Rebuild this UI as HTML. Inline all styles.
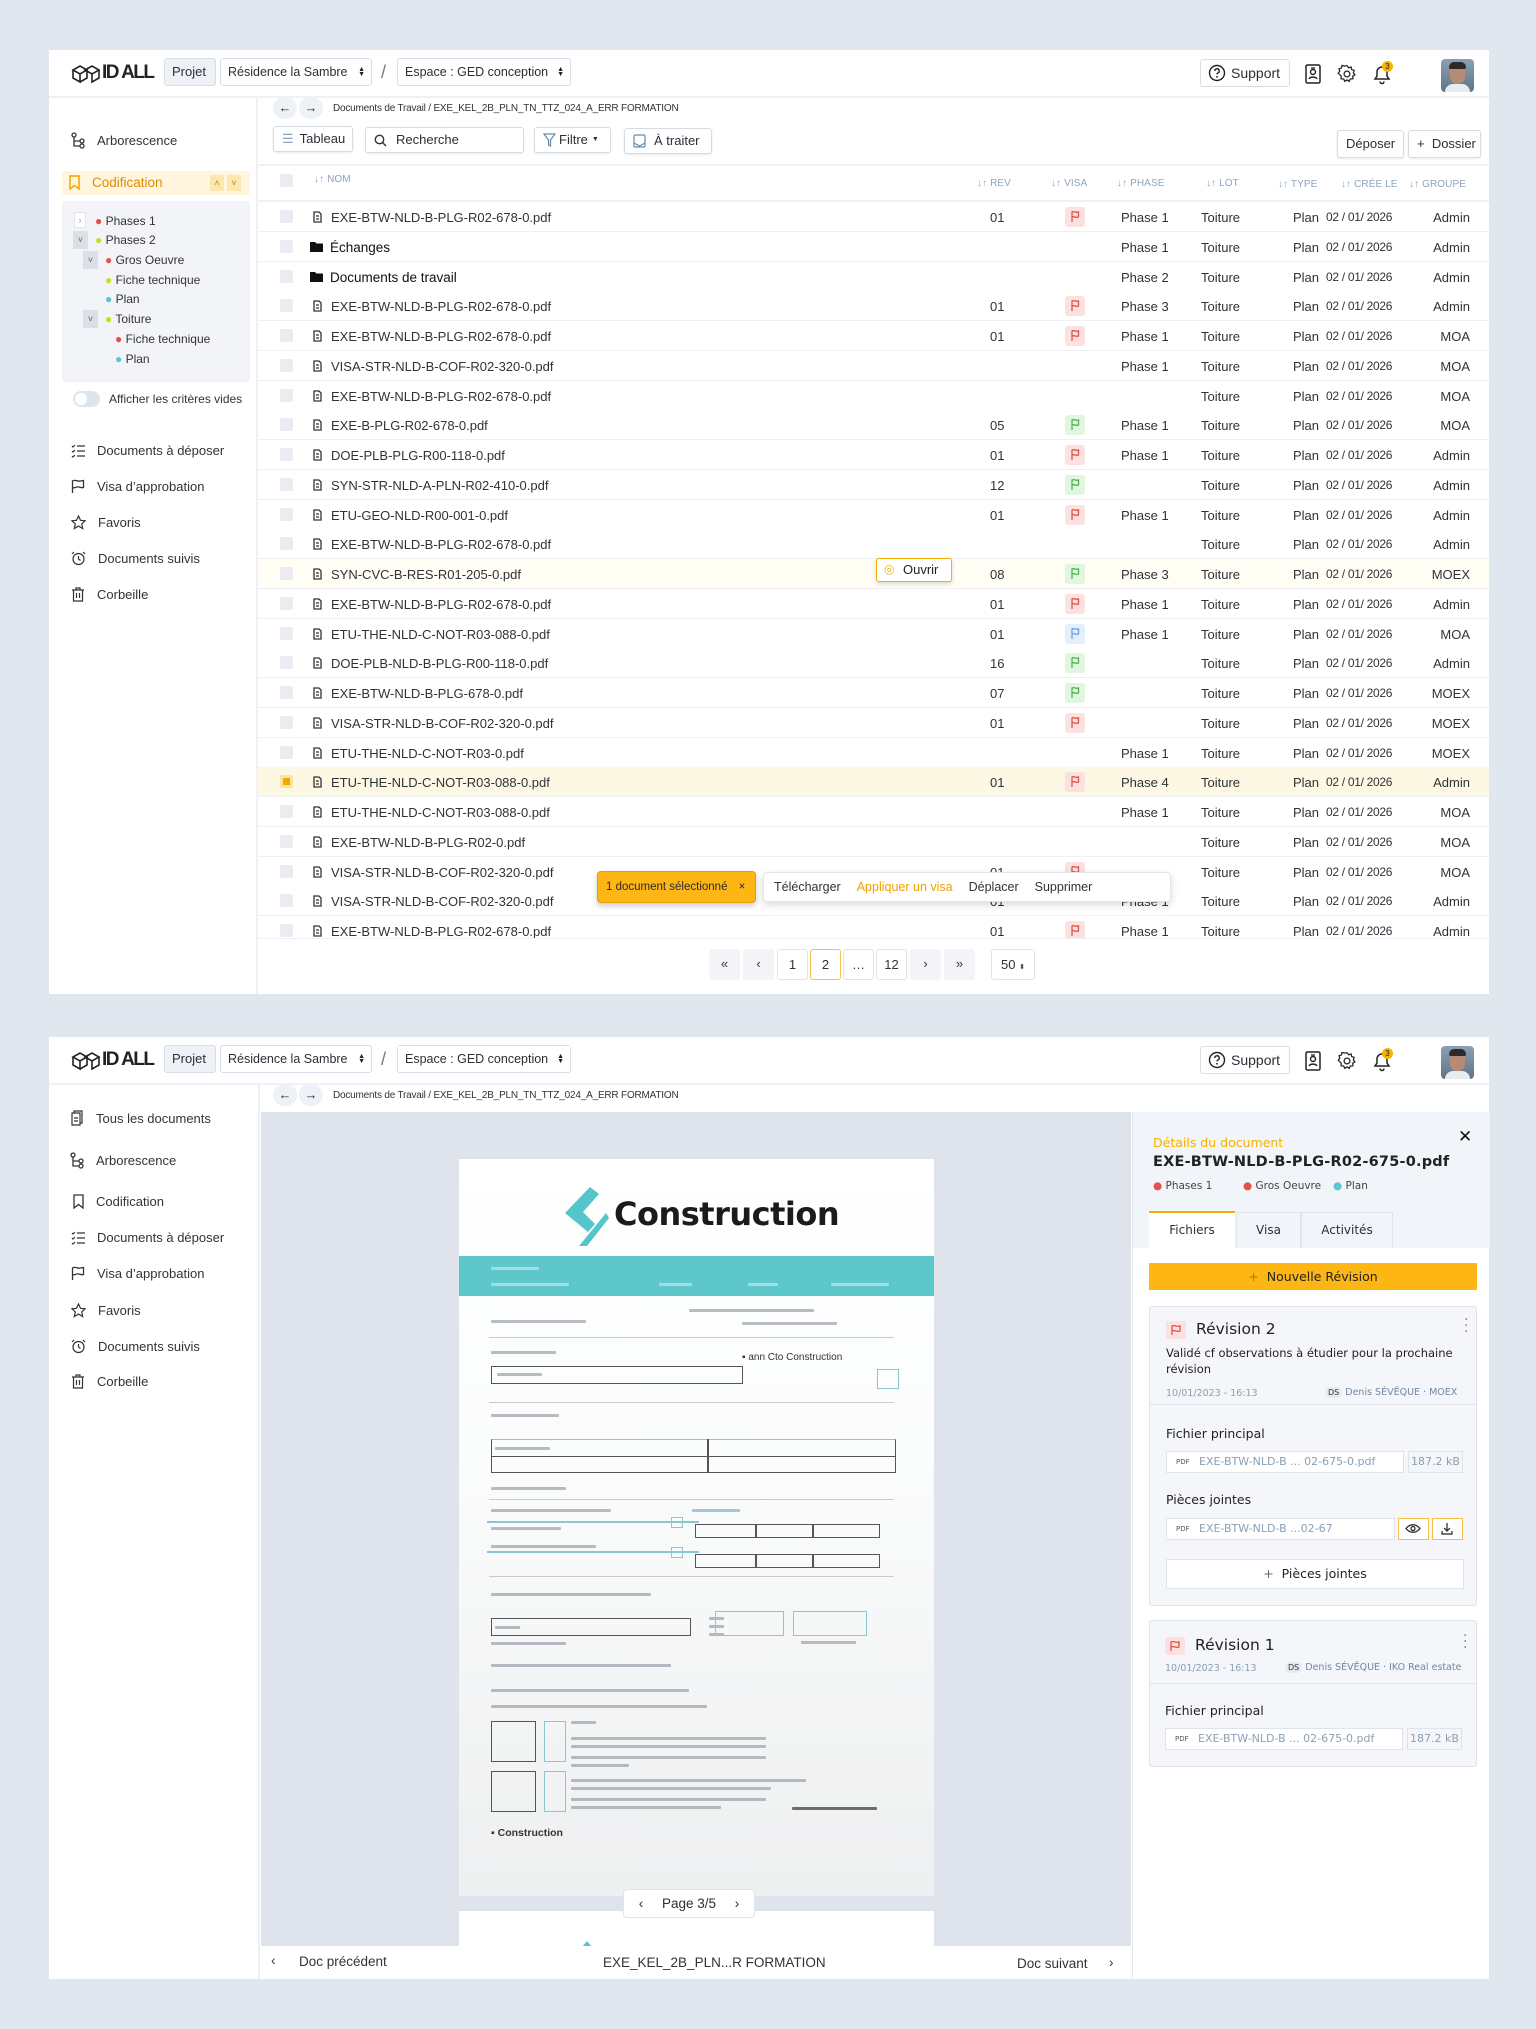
<!DOCTYPE html>
<html><head><meta charset="utf-8">
<style>
*{box-sizing:border-box;margin:0;padding:0}
body{width:1536px;height:2029px;background:#e1e7ef;font-family:"Liberation Sans",sans-serif;color:#2b2f36;position:relative;overflow:hidden}
.a{position:absolute}
.panel{position:absolute;background:#fff}
.hdr{position:absolute;left:0;right:0;top:0;height:48px;border-bottom:2px solid #eef1f5;background:#fff}
.sel{position:absolute;height:28px;border:1px solid #d9dee6;border-radius:3px;font-size:12.5px;line-height:26px;padding-left:7px;background:#fff;white-space:nowrap}
.arr{position:absolute;right:6px;top:8px;font-size:7px;line-height:5px;color:#222}
.nav{font-family:"Liberation Sans",sans-serif}
.side{position:absolute;font-size:13px;color:#333;display:flex;align-items:center;white-space:nowrap}
.side svg{margin-right:12px}
.btn{position:absolute;height:26px;border:1px solid #d7dce3;border-radius:3px;background:#fff;font-size:13px;line-height:24px;box-shadow:0 1px 2px rgba(0,0,0,.08);display:flex;align-items:center;padding:0 8px;white-space:nowrap}
.th{position:absolute;top:176px;font-size:10px;color:#8fa3bd;letter-spacing:.1px;white-space:nowrap}
.row{position:absolute;left:0;width:1231px;height:30px;border-bottom:1px solid #edf0f4;font-size:13px;color:#2f3338}
.row span{position:absolute;top:8px;white-space:nowrap}
.cb{position:absolute;left:22px;top:8px;width:13px;height:13px;background:#e9ecf1;border-radius:2px}
.fl{position:absolute;left:807px;top:5px;width:20px;height:20px;border-radius:3px}
.r{background:#fde1df}.g{background:#e1f6de}.b{background:#e2f0fb}
.pg{position:absolute;top:950px;width:31px;height:31px;border-radius:3px;font-size:13px;text-align:center;line-height:29px;color:#333;white-space:nowrap}
.ln{position:absolute;height:3px;background:#9aa0a8;border-radius:1px;opacity:.7}
.bx{position:absolute;border:1.5px solid #555}
.bb{position:absolute;border:1.5px solid #8cc6d4}
.hl{position:absolute;height:1px;background:#c7cbd0}
.poppins{font-family:"DejaVu Sans","Liberation Sans",sans-serif}
</style></head><body>

<!-- ============ TOP PANEL ============ -->
<div class="panel" style="left:49px;top:50px;width:1440px;height:944px">
 <div class="hdr">
  <svg class="a" style="left:22px;top:13px" width="30" height="22" viewBox="0 0 30 22"><g fill="none" stroke="#222" stroke-width="1.6"><path d="M2 7l7-4 7 4-7 4z M2 7v8l7 4v-8 M16 7v8l-7 4"/><path d="M14 7l7-4 7 4-7 4z M28 7v8l-7 4v-8"/></g></svg>
  <div class="a" style="left:53px;top:12px;font-size:19px;font-weight:bold;letter-spacing:-1.5px;color:#222">ID ALL</div>
  <div class="sel" style="left:115px;top:8px;width:52px;background:#eef1f5;font-size:13px">Projet</div>
  <div class="sel" style="left:171px;top:8px;width:152px">Résidence la Sambre<span class="arr">▲<br>▼</span></div>
  <div class="a" style="left:332px;top:12px;font-size:18px;color:#6b7a90">/</div>
  <div class="sel" style="left:348px;top:8px;width:174px">Espace : GED conception<span class="arr">▲<br>▼</span></div>
  <div class="sel" style="left:1151px;top:9px;width:90px;display:flex;align-items:center;font-size:14px"><svg width="18" height="18" viewBox="0 0 18 18" style="margin-right:5px"><circle cx="9" cy="9" r="7.5" fill="none" stroke="#222" stroke-width="1.4"/><path d="M6.8 7a2.2 2.2 0 1 1 3 2c-.6.3-.8.7-.8 1.4" fill="none" stroke="#222" stroke-width="1.4"/><circle cx="9" cy="12.8" r=".9" fill="#222"/></svg>Support</div>
  <svg class="a" style="left:1256px;top:14px" width="16" height="20" viewBox="0 0 16 20"><rect x="1" y="1" width="14" height="18" rx="1.5" fill="none" stroke="#222" stroke-width="1.5"/><circle cx="8" cy="8" r="2.5" fill="none" stroke="#222" stroke-width="1.4"/><path d="M4 15c1-2.5 7-2.5 8 0" fill="none" stroke="#222" stroke-width="1.4"/><path d="M6 4h4" stroke="#222" stroke-width="1.3"/></svg>
  <svg class="a" style="left:1288px;top:14px" width="20" height="20" viewBox="0 0 24 24"><path d="M12 2l2 2.5 3-.8.6 3 3 1-1 2.9 1.9 2.4-2.6 1.7.2 3.1-3.1.2-1.4 2.8-2.6-1.7-2.6 1.7-1.4-2.8-3.1-.2.2-3.1L1.5 11l1.9-2.4-1-2.9 3-1 .6-3 3 .8z" fill="none" stroke="#222" stroke-width="1.5"/><circle cx="12" cy="12" r="3.5" fill="none" stroke="#222" stroke-width="1.5"/></svg>
  <svg class="a" style="left:1322px;top:13px" width="22" height="22" viewBox="0 0 22 22"><path d="M4 16h14l-2-3V9a5 5 0 0 0-10 0v4z M9 18.5a2 2 0 0 0 4 0" fill="none" stroke="#222" stroke-width="1.5"/></svg>
  <div class="a" style="left:1333px;top:11px;width:11px;height:11px;border-radius:6px;background:#f7b500;font-size:8px;color:#222;text-align:center;line-height:11px">3</div>
  <div class="a" style="left:1392px;top:9px;width:33px;height:33px;border-radius:4px;background:linear-gradient(#8aa0b5,#5f7487)"><div class="a" style="left:9px;top:5px;width:15px;height:20px;border-radius:7px;background:#b58b73"></div><div class="a" style="left:8px;top:3px;width:17px;height:7px;border-radius:6px 6px 2px 2px;background:#2d2a28"></div><div class="a" style="left:4px;top:25px;width:25px;height:8px;border-radius:8px 8px 0 0;background:#e8ecef"></div></div>
 </div>

 <!-- sidebar -->
 <div class="a" style="left:0;top:48px;width:209px;height:896px;border-right:2px solid #eef1f5"></div>
 <div class="side" style="left:22px;top:82px"><svg width="14" height="17" viewBox="0 0 14 17"><g fill="none" stroke="#333" stroke-width="1.3"><circle cx="3" cy="3" r="2"/><circle cx="11" cy="9" r="2"/><circle cx="11" cy="14" r="2"/><path d="M3 5v9h6 M3 9h6"/></g></svg>Arborescence</div>
 <div class="a" style="left:13px;top:121px;width:188px;height:24px;background:#fff6dd;border-radius:3px"></div>
 <div class="side" style="left:20px;top:125px;color:#e28a00;font-size:13.5px"><svg width="11" height="15" viewBox="0 0 11 15"><path d="M1 1h9v13l-4.5-3.5L1 14z" fill="none" stroke="#f0a000" stroke-width="1.4"/></svg>Codification</div>
 <div class="a" style="left:161px;top:125px;width:14px;height:16px;background:#fbe7b0;font-size:9px;text-align:center;line-height:16px;color:#c88400">˄</div>
 <div class="a" style="left:178px;top:125px;width:14px;height:16px;background:#fbe7b0;font-size:9px;text-align:center;line-height:16px;color:#c88400">˅</div>
 <div class="a" style="left:13px;top:151px;width:188px;height:181px;background:#f2f4f7;border-radius:3px"></div>
 <div class="a" style="left:25px;top:162px;width:12px;height:16px;border:1px solid #e1e5eb;background:#fff;font-size:9px;color:#999;text-align:center;line-height:14px">›</div>
 <div class="a" style="left:24px;top:181px;width:15px;height:18px;background:#d9e0e8;font-size:9px;color:#666;text-align:center;line-height:18px">˅</div>
 <div class="a" style="left:34px;top:201px;width:15px;height:18px;background:#d9e0e8;font-size:9px;color:#666;text-align:center;line-height:18px">˅</div>
 <div class="a" style="left:34px;top:260px;width:15px;height:18px;background:#d9e0e8;font-size:9px;color:#666;text-align:center;line-height:18px">˅</div>
 <div class="a" style="font-size:12px;color:#333;left:0;top:0">
  <div class="a" style="left:46px;top:164px;white-space:nowrap"><b style="color:#e0524a">●</b> Phases 1</div>
  <div class="a" style="left:46px;top:183px;white-space:nowrap"><b style="color:#c6e020">●</b> Phases 2</div>
  <div class="a" style="left:56px;top:203px;white-space:nowrap"><b style="color:#e0524a">●</b> Gros Oeuvre</div>
  <div class="a" style="left:56px;top:223px;white-space:nowrap"><b style="color:#c6e020">●</b> Fiche technique</div>
  <div class="a" style="left:56px;top:242px;white-space:nowrap"><b style="color:#5ec4d0">●</b> Plan</div>
  <div class="a" style="left:56px;top:262px;white-space:nowrap"><b style="color:#c6e020">●</b> Toiture</div>
  <div class="a" style="left:66px;top:282px;white-space:nowrap"><b style="color:#e0524a">●</b> Fiche technique</div>
  <div class="a" style="left:66px;top:302px;white-space:nowrap"><b style="color:#5ec4d0">●</b> Plan</div>
 </div>
 <div class="a" style="left:24px;top:341px;width:27px;height:16px;border-radius:8px;background:#dfe5ec"><div class="a" style="left:2px;top:2px;width:12px;height:12px;border-radius:6px;background:#fff"></div></div>
 <div class="a" style="left:60px;top:342px;font-size:12px;color:#333;white-space:nowrap">Afficher les critères vides</div>
 <div class="side" style="left:22px;top:393px"><svg width="14" height="14" viewBox="0 0 14 14"><g fill="none" stroke="#333" stroke-width="1.2"><path d="M1 2l1 1 2-2 M1 7l1 1 2-2 M1 12l1 1 2-2 M6 2h8 M6 7h8 M6 12h8"/></g></svg>Documents à déposer</div>
 <div class="side" style="left:22px;top:429px"><svg width="14" height="15" viewBox="0 0 14 15"><path d="M1.5 14V2c3-2 5 1 8 0l3-.5v7c-3 1-5-2-8 0l-3 .5" fill="none" stroke="#333" stroke-width="1.3"/></svg>Visa d’approbation</div>
 <div class="side" style="left:22px;top:465px"><svg width="15" height="15" viewBox="0 0 15 15"><path d="M7.5 1l2 4.3 4.6.5-3.4 3.1 1 4.6-4.2-2.4-4.2 2.4 1-4.6L.9 5.8l4.6-.5z" fill="none" stroke="#333" stroke-width="1.2"/></svg>Favoris</div>
 <div class="side" style="left:22px;top:501px"><svg width="15" height="15" viewBox="0 0 15 15"><g fill="none" stroke="#333" stroke-width="1.2"><circle cx="7.5" cy="8" r="5.5"/><path d="M7.5 5v3l2 1.5 M1 3l2-2 M14 3l-2-2"/></g></svg>Documents suivis</div>
 <div class="side" style="left:22px;top:537px"><svg width="14" height="15" viewBox="0 0 14 15"><g fill="none" stroke="#333" stroke-width="1.2"><path d="M1 3h12 M5 3V1h4v2 M2.5 3v11h9V3 M5.5 6v5 M8.5 6v5"/></g></svg>Corbeille</div>

 <!-- content -->
 <div class="a" style="left:224px;top:47px;width:24px;height:22px;border-radius:11px;background:#eef1f5;text-align:center;font-size:13px;line-height:22px">←</div>
 <div class="a" style="left:250px;top:47px;width:24px;height:22px;border-radius:11px;background:#eef1f5;text-align:center;font-size:13px;line-height:22px">→</div>
 <div class="a" style="left:284px;top:53px;font-size:10px;color:#333;letter-spacing:-.2px;white-space:nowrap">Documents de Travail / EXE_KEL_2B_PLN_TN_TTZ_024_A_ERR FORMATION</div>
 <div class="btn" style="left:224px;top:76px;width:80px;font-size:13px"><span style="color:#8fa3bd;margin-right:6px">☰</span>Tableau</div>
 <div class="btn" style="left:316px;top:77px;width:159px;font-size:13px"><svg width="13" height="13" viewBox="0 0 13 13" style="margin-right:9px"><circle cx="5.5" cy="5.5" r="4.2" fill="none" stroke="#333" stroke-width="1.4"/><path d="M8.5 8.5l3.5 3.5" stroke="#333" stroke-width="1.4"/></svg>Recherche</div>
 <div class="btn" style="left:485px;top:77px;width:77px;font-size:13px"><svg width="13" height="14" viewBox="0 0 13 14" style="margin-right:3px"><path d="M1 1h11L7.5 7v6L5.5 12V7z" fill="none" stroke="#6b8aa8" stroke-width="1.2"/></svg>Filtre <span style="font-size:7px;margin-left:4px">▼</span></div>
 <div class="btn" style="left:575px;top:78px;width:88px;font-size:13px"><svg width="13" height="14" viewBox="0 0 13 14" style="margin-right:8px"><rect x="1" y="1" width="11" height="12" rx="1" fill="none" stroke="#6b8aa8" stroke-width="1.2"/><path d="M1 9l5.5 3 5.5-3" fill="none" stroke="#6b8aa8" stroke-width="1.2"/></svg>À traiter</div>
 <div class="btn" style="left:1288px;top:80px;width:67px;height:28px;font-size:13px">Déposer</div>
 <div class="btn" style="left:1359px;top:80px;width:73px;height:28px;font-size:13px">+&nbsp; Dossier</div>
 <div class="a" style="left:209px;top:114px;width:1231px;height:2px;background:#eef1f5"></div>
 <div class="a" style="left:231px;top:124px;width:13px;height:13px;background:#e9ecf1;border-radius:2px"></div>
 <div class="th" style="left:265px;top:124px">↓↑ NOM</div>
 <div class="th" style="left:928px;top:128px">↓↑ REV</div>
 <div class="th" style="left:1002px;top:128px">↓↑ VISA</div>
 <div class="th" style="left:1068px;top:128px">↓↑ PHASE</div>
 <div class="th" style="left:1157px;top:128px">↓↑ LOT</div>
 <div class="th" style="left:1229px;top:129px">↓↑ TYPE</div>
 <div class="th" style="left:1292px;top:129px">↓↑ CRÉE LE</div>
 <div class="th" style="left:1360px;top:129px">↓↑ GROUPE</div>
 <div class="a" style="left:209px;top:150px;width:1231px;height:2px;background:#eef1f5"></div>

 <div class="a" style="left:209px;top:152px;width:1231px;height:736px;overflow:hidden" id="tb"></div>
 <div class="a" style="left:209px;top:888px;width:1231px;height:1px;background:#eef1f5"></div>

 <!-- selection bar -->
 <div class="a" style="left:548px;top:821px;width:159px;height:32px;background:#fdb614;border:1px solid #e39f00;border-radius:4px;box-shadow:0 3px 6px rgba(0,0,0,.2);font-size:11.5px;line-height:30px;padding-left:8px;color:#2b2b2b;white-space:nowrap">1 document sélectionné <span style="margin-left:8px">×</span></div>
 <div class="a" style="left:714px;top:822px;width:408px;height:30px;background:#fff;border:1px solid #e1e5ea;border-radius:4px;box-shadow:0 3px 8px rgba(0,0,0,.15);font-size:12.5px;line-height:28px;color:#333;white-space:nowrap"><span style="margin-left:10px">Télécharger</span><span style="margin-left:16px;color:#f0a000">Appliquer un visa</span><span style="margin-left:16px">Déplacer</span><span style="margin-left:16px">Supprimer</span></div>

 <!-- pagination -->
 <div class="pg" style="left:660px;top:899px;background:#f2f4f7">«</div>
 <div class="pg" style="left:694px;top:899px;background:#f2f4f7">‹</div>
 <div class="pg" style="left:728px;top:899px;border:1px solid #dfe3e9">1</div>
 <div class="pg" style="left:761px;top:899px;border:1px solid #f5c04a">2</div>
 <div class="pg" style="left:794px;top:899px;border:1px solid #dfe3e9">…</div>
 <div class="pg" style="left:827px;top:899px;border:1px solid #dfe3e9">12</div>
 <div class="pg" style="left:861px;top:899px;background:#f2f4f7">›</div>
 <div class="pg" style="left:895px;top:899px;background:#f2f4f7">»</div>
 <div class="pg" style="left:942px;top:899px;width:44px;border:1px solid #dfe3e9">50 <span style="font-size:7px">⬍</span></div>
</div>

<!-- ============ BOTTOM PANEL ============ -->
<div class="panel" style="left:49px;top:1037px;width:1440px;height:942px">
 <div class="hdr">
  <svg class="a" style="left:22px;top:13px" width="30" height="22" viewBox="0 0 30 22"><g fill="none" stroke="#222" stroke-width="1.6"><path d="M2 7l7-4 7 4-7 4z M2 7v8l7 4v-8 M16 7v8l-7 4"/><path d="M14 7l7-4 7 4-7 4z M28 7v8l-7 4v-8"/></g></svg>
  <div class="a" style="left:53px;top:12px;font-size:19px;font-weight:bold;letter-spacing:-1.5px;color:#222">ID ALL</div>
  <div class="sel" style="left:115px;top:8px;width:52px;background:#eef1f5;font-size:13px">Projet</div>
  <div class="sel" style="left:171px;top:8px;width:152px">Résidence la Sambre<span class="arr">▲<br>▼</span></div>
  <div class="a" style="left:332px;top:12px;font-size:18px;color:#6b7a90">/</div>
  <div class="sel" style="left:348px;top:8px;width:174px">Espace : GED conception<span class="arr">▲<br>▼</span></div>
  <div class="sel" style="left:1151px;top:9px;width:90px;display:flex;align-items:center;font-size:14px"><svg width="18" height="18" viewBox="0 0 18 18" style="margin-right:5px"><circle cx="9" cy="9" r="7.5" fill="none" stroke="#222" stroke-width="1.4"/><path d="M6.8 7a2.2 2.2 0 1 1 3 2c-.6.3-.8.7-.8 1.4" fill="none" stroke="#222" stroke-width="1.4"/><circle cx="9" cy="12.8" r=".9" fill="#222"/></svg>Support</div>
  <svg class="a" style="left:1256px;top:14px" width="16" height="20" viewBox="0 0 16 20"><rect x="1" y="1" width="14" height="18" rx="1.5" fill="none" stroke="#222" stroke-width="1.5"/><circle cx="8" cy="8" r="2.5" fill="none" stroke="#222" stroke-width="1.4"/><path d="M4 15c1-2.5 7-2.5 8 0" fill="none" stroke="#222" stroke-width="1.4"/><path d="M6 4h4" stroke="#222" stroke-width="1.3"/></svg>
  <svg class="a" style="left:1288px;top:14px" width="20" height="20" viewBox="0 0 24 24"><path d="M12 2l2 2.5 3-.8.6 3 3 1-1 2.9 1.9 2.4-2.6 1.7.2 3.1-3.1.2-1.4 2.8-2.6-1.7-2.6 1.7-1.4-2.8-3.1-.2.2-3.1L1.5 11l1.9-2.4-1-2.9 3-1 .6-3 3 .8z" fill="none" stroke="#222" stroke-width="1.5"/><circle cx="12" cy="12" r="3.5" fill="none" stroke="#222" stroke-width="1.5"/></svg>
  <svg class="a" style="left:1322px;top:13px" width="22" height="22" viewBox="0 0 22 22"><path d="M4 16h14l-2-3V9a5 5 0 0 0-10 0v4z M9 18.5a2 2 0 0 0 4 0" fill="none" stroke="#222" stroke-width="1.5"/></svg>
  <div class="a" style="left:1333px;top:11px;width:11px;height:11px;border-radius:6px;background:#f7b500;font-size:8px;color:#222;text-align:center;line-height:11px">3</div>
  <div class="a" style="left:1392px;top:9px;width:33px;height:33px;border-radius:4px;background:linear-gradient(#8aa0b5,#5f7487)"><div class="a" style="left:9px;top:5px;width:15px;height:20px;border-radius:7px;background:#b58b73"></div><div class="a" style="left:8px;top:3px;width:17px;height:7px;border-radius:6px 6px 2px 2px;background:#2d2a28"></div><div class="a" style="left:4px;top:25px;width:25px;height:8px;border-radius:8px 8px 0 0;background:#e8ecef"></div></div>
 </div>
 <div class="a" style="left:0;top:48px;width:211px;height:894px;border-right:2px solid #eef1f5"></div>
 <div class="side" style="left:22px;top:73px"><svg width="13" height="16" viewBox="0 0 13 16"><g fill="none" stroke="#333" stroke-width="1.2"><path d="M3 3V1h8v12h-2 M1 3h8v12H1z M3 11h4 M3 8h4"/></g></svg>Tous les documents</div>
 <div class="side" style="left:21px;top:115px"><svg width="14" height="17" viewBox="0 0 14 17"><g fill="none" stroke="#333" stroke-width="1.3"><circle cx="3" cy="3" r="2"/><circle cx="11" cy="9" r="2"/><circle cx="11" cy="14" r="2"/><path d="M3 5v9h6 M3 9h6"/></g></svg>Arborescence</div>
 <div class="side" style="left:24px;top:157px"><svg width="11" height="15" viewBox="0 0 11 15"><path d="M1 1h9v13l-4.5-3.5L1 14z" fill="none" stroke="#333" stroke-width="1.3"/></svg>Codification</div>
 <div class="side" style="left:22px;top:193px"><svg width="14" height="14" viewBox="0 0 14 14"><g fill="none" stroke="#333" stroke-width="1.2"><path d="M1 2l1 1 2-2 M1 7l1 1 2-2 M1 12l1 1 2-2 M6 2h8 M6 7h8 M6 12h8"/></g></svg>Documents à déposer</div>
 <div class="side" style="left:22px;top:229px"><svg width="14" height="15" viewBox="0 0 14 15"><path d="M1.5 14V2c3-2 5 1 8 0l3-.5v7c-3 1-5-2-8 0l-3 .5" fill="none" stroke="#333" stroke-width="1.3"/></svg>Visa d’approbation</div>
 <div class="side" style="left:22px;top:266px"><svg width="15" height="15" viewBox="0 0 15 15"><path d="M7.5 1l2 4.3 4.6.5-3.4 3.1 1 4.6-4.2-2.4-4.2 2.4 1-4.6L.9 5.8l4.6-.5z" fill="none" stroke="#333" stroke-width="1.2"/></svg>Favoris</div>
 <div class="side" style="left:22px;top:302px"><svg width="15" height="15" viewBox="0 0 15 15"><g fill="none" stroke="#333" stroke-width="1.2"><circle cx="7.5" cy="8" r="5.5"/><path d="M7.5 5v3l2 1.5 M1 3l2-2 M14 3l-2-2"/></g></svg>Documents suivis</div>
 <div class="side" style="left:22px;top:337px"><svg width="14" height="15" viewBox="0 0 14 15"><g fill="none" stroke="#333" stroke-width="1.2"><path d="M1 3h12 M5 3V1h4v2 M2.5 3v11h9V3 M5.5 6v5 M8.5 6v5"/></g></svg>Corbeille</div>

 <div class="a" style="left:224px;top:47px;width:24px;height:22px;border-radius:11px;background:#eef1f5;text-align:center;font-size:13px;line-height:22px">←</div>
 <div class="a" style="left:250px;top:47px;width:24px;height:22px;border-radius:11px;background:#eef1f5;text-align:center;font-size:13px;line-height:22px">→</div>
 <div class="a" style="left:284px;top:53px;font-size:10px;color:#333;letter-spacing:-.2px;white-space:nowrap">Documents de Travail / EXE_KEL_2B_PLN_TN_TTZ_024_A_ERR FORMATION</div>

 <!-- viewer -->
 <div class="a" style="left:212px;top:75px;width:870px;height:834px;background:#dfe4ec;overflow:hidden">
  <div class="a" style="left:198px;top:47px;width:475px;height:737px;background:linear-gradient(#fff 0%,#fbfcfc 40%,#eeeff0 100%)">
   <svg class="a" style="left:101px;top:26px" width="50" height="62" viewBox="0 0 50 62"><path d="M30 2l9 7-16 18 12 12-7 8L5 28z" fill="#55c5cc"/><path d="M46 28l3 5-22 28h-8z" fill="#55c5cc"/></svg>
   <div class="a" style="left:155px;top:36px;font-size:32px;font-weight:bold;color:#1b1b1b;letter-spacing:-.5px;font-family:'DejaVu Sans',sans-serif">Construction</div>
   <div class="a" style="left:0;top:97px;width:475px;height:40px;background:#5ec7cb"></div>
   <div class="ln" style="left:32px;top:108px;width:48px;background:#bfe9ea"></div>
   <div class="ln" style="left:32px;top:124px;width:78px;background:#bfe9ea"></div>
   <div class="ln" style="left:200px;top:124px;width:33px;background:#bfe9ea"></div>
   <div class="ln" style="left:289px;top:124px;width:30px;background:#bfe9ea"></div>
   <div class="ln" style="left:372px;top:124px;width:58px;background:#bfe9ea"></div>
   <div class="ln" style="left:32px;top:161px;width:95px"></div>
   <div class="ln" style="left:230px;top:150px;width:125px"></div>
   <div class="ln" style="left:283px;top:163px;width:95px"></div>
   <div class="hl" style="left:30px;top:178px;width:405px"></div>
   <div class="ln" style="left:32px;top:192px;width:65px"></div>
   <div class="a" style="left:283px;top:193px;font-size:10px;color:#333;white-space:nowrap">▪ ann Cto Construction</div>
   <div class="bx" style="left:32px;top:207px;width:252px;height:18px"></div>
   <div class="ln" style="left:38px;top:214px;width:45px"></div>
   <div class="bb" style="left:418px;top:210px;width:22px;height:20px"></div>
   <div class="hl" style="left:30px;top:243px;width:405px"></div>
   <div class="ln" style="left:32px;top:255px;width:68px"></div>
   <div class="bx" style="left:32px;top:280px;width:405px;height:34px;border-top-color:#8cc6d4"></div>
   <div class="hl" style="left:32px;top:297px;width:405px;background:#555"></div>
   <div class="a" style="left:248px;top:280px;width:1.5px;height:34px;background:#555"></div>
   <div class="ln" style="left:36px;top:288px;width:55px"></div>
   <div class="ln" style="left:32px;top:328px;width:75px"></div>
   <div class="hl" style="left:30px;top:340px;width:405px"></div>
   <div class="ln" style="left:32px;top:350px;width:120px"></div>
   <div class="ln" style="left:233px;top:350px;width:48px;background:#7bb4c8"></div>
   <div class="a" style="left:28px;top:362px;width:212px;height:1.5px;background:#8cc6d4"></div>
   <div class="bb" style="left:212px;top:358px;width:12px;height:11px"></div>
   <div class="ln" style="left:32px;top:368px;width:70px"></div>
   <div class="bx" style="left:236px;top:365px;width:185px;height:14px"></div>
   <div class="a" style="left:296px;top:365px;width:1.5px;height:14px;background:#555"></div>
   <div class="a" style="left:353px;top:365px;width:1.5px;height:14px;background:#555"></div>
   <div class="ln" style="left:32px;top:386px;width:105px"></div>
   <div class="a" style="left:28px;top:392px;width:212px;height:1.5px;background:#8cc6d4"></div>
   <div class="bb" style="left:212px;top:388px;width:12px;height:11px"></div>
   <div class="bx" style="left:236px;top:395px;width:185px;height:14px"></div>
   <div class="a" style="left:296px;top:395px;width:1.5px;height:14px;background:#555"></div>
   <div class="a" style="left:353px;top:395px;width:1.5px;height:14px;background:#555"></div>
   <div class="hl" style="left:30px;top:417px;width:405px"></div>
   <div class="ln" style="left:32px;top:434px;width:160px"></div>
   <div class="bx" style="left:32px;top:459px;width:200px;height:18px"></div>
   <div class="ln" style="left:36px;top:467px;width:25px"></div>
   <div class="ln" style="left:32px;top:483px;width:75px"></div>
   <div class="ln" style="left:250px;top:458px;width:15px"></div>
   <div class="ln" style="left:250px;top:466px;width:15px"></div>
   <div class="ln" style="left:250px;top:474px;width:15px"></div>
   <div class="bb" style="left:256px;top:452px;width:69px;height:25px"></div>
   <div class="bb" style="left:334px;top:452px;width:74px;height:25px"></div>
   <div class="ln" style="left:342px;top:482px;width:55px"></div>
   <div class="ln" style="left:32px;top:505px;width:180px"></div>
   <div class="ln" style="left:32px;top:530px;width:198px"></div>
   <div class="ln" style="left:32px;top:546px;width:216px"></div>
   <div class="bx" style="left:32px;top:562px;width:45px;height:41px"></div>
   <div class="bb" style="left:85px;top:562px;width:22px;height:41px"></div>
   <div class="ln" style="left:112px;top:562px;width:25px"></div>
   <div class="ln" style="left:112px;top:578px;width:195px"></div>
   <div class="ln" style="left:112px;top:586px;width:195px"></div>
   <div class="ln" style="left:112px;top:597px;width:195px"></div>
   <div class="ln" style="left:112px;top:605px;width:58px"></div>
   <div class="bx" style="left:32px;top:612px;width:45px;height:41px"></div>
   <div class="bb" style="left:85px;top:612px;width:22px;height:41px"></div>
   <div class="ln" style="left:112px;top:620px;width:235px"></div>
   <div class="ln" style="left:112px;top:628px;width:200px"></div>
   <div class="ln" style="left:112px;top:639px;width:195px"></div>
   <div class="ln" style="left:112px;top:647px;width:150px"></div>
   <div class="ln" style="left:333px;top:648px;width:85px;background:#333"></div>
   <div class="a" style="left:32px;top:668px;font-size:10.5px;font-weight:bold;color:#333;white-space:nowrap">▪ Construction</div>
  </div>
  <div class="a" style="left:198px;top:799px;width:475px;height:40px;background:#fff"></div>
  <div class="a" style="left:320px;top:829px;width:0;height:0;border-left:6px solid transparent;border-right:6px solid transparent;border-bottom:7px solid #5ec7cb"></div>
  <div class="a" style="left:362px;top:777px;width:132px;height:29px;background:#fff;border:1px solid #e1e5ea;border-radius:4px;font-size:13.5px;line-height:27px;text-align:center;white-space:nowrap">‹&nbsp;&nbsp;&nbsp;&nbsp; Page 3/5 &nbsp;&nbsp;&nbsp;&nbsp;›</div>
 </div>
 <div class="a" style="left:212px;top:909px;width:870px;height:33px;background:#fff;font-size:13.5px;color:#333;white-space:nowrap">
  <span class="a" style="left:10px;top:7px">‹</span><span class="a" style="left:38px;top:8px">Doc précédent</span>
  <span class="a" style="left:342px;top:9px">EXE_KEL_2B_PLN...R FORMATION</span>
  <span class="a" style="left:756px;top:10px">Doc suivant</span><span class="a" style="left:848px;top:9px">›</span>
 </div>

 <!-- details panel -->
 <div class="a poppins" style="left:1083px;top:75px;width:357px;height:867px;background:#fff;border-left:1px solid #e6eaef">
  <div class="a" style="left:0;top:0;width:357px;height:136px;background:#f1f4f8"></div>
  <div class="a" style="left:20px;top:23px;font-size:12.5px;color:#f5b000">Détails du document</div>
  <div class="a" style="left:325px;top:15px;font-size:17px;font-weight:bold;color:#111">✕</div>
  <div class="a" style="left:20px;top:42px;font-size:14.5px;font-weight:bold;color:#222;letter-spacing:.2px;white-space:nowrap">EXE-BTW-NLD-B-PLG-R02-675-0.pdf</div>
  <div class="a" style="left:20px;top:68px;font-size:10.5px;color:#444;white-space:nowrap"><b style="color:#e0524a">●</b> Phases 1</div>
  <div class="a" style="left:110px;top:68px;font-size:10.5px;color:#444;white-space:nowrap"><b style="color:#e0524a">●</b> Gros Oeuvre</div>
  <div class="a" style="left:200px;top:68px;font-size:10.5px;color:#444;white-space:nowrap"><b style="color:#5ec4d0">●</b> Plan</div>
  <div class="a" style="left:16px;top:99px;width:86px;height:38px;background:#fff;border-top:2px solid #f5b000;font-size:12px;text-align:center;line-height:34px">Fichiers</div>
  <div class="a" style="left:103px;top:100px;width:65px;height:36px;border:1px solid #dfe4ea;border-bottom:none;font-size:12px;text-align:center;line-height:34px">Visa</div>
  <div class="a" style="left:168px;top:100px;width:92px;height:36px;border:1px solid #dfe4ea;border-bottom:none;font-size:12px;text-align:center;line-height:34px">Activités</div>
  <div class="a" style="left:16px;top:151px;width:328px;height:27px;background:#fdb614;font-size:12.5px;text-align:center;line-height:27px;color:#222"><span style="color:#b07a00">+</span>&nbsp; Nouvelle Révision</div>

  <div class="a" style="left:16px;top:194px;width:328px;height:300px;border:1px solid #dfe4ea;border-radius:3px;background:#f4f6f9">
   <div class="a" style="left:0;top:97px;width:326px;height:1px;background:#dfe4ea"></div>
   <div class="a" style="left:16px;top:14px;width:20px;height:18px;background:#fde1df;border-radius:2px"><svg width="20" height="18" viewBox="0 0 20 18"><path d="M6 14V5c3-1.5 5 1.5 8 0v5c-3 1.5-5-1.5-8 0" fill="none" stroke="#e0524a" stroke-width="1.3"/></svg></div>
   <div class="a" style="left:46px;top:13px;font-size:15.5px;color:#222">Révision 2</div>
   <div class="a" style="left:314px;top:10px;font-size:14px;color:#888;line-height:6px">·<br>·<br>·</div>
   <div class="a" style="left:16px;top:38px;width:300px;font-size:11.5px;line-height:16px;color:#222">Validé cf observations à étudier pour la prochaine révision</div>
   <div class="a" style="left:16px;top:81px;font-size:9.5px;color:#8aa0b5">10/01/2023 - 16:13</div>
   <div class="a" style="left:175px;top:80px;font-size:9.5px;color:#6f88a3;white-space:nowrap"><span style="background:#e6eaef;border-radius:7px;padding:1px 3px;font-size:8px;color:#333">DS</span> Denis SÉVÊQUE · MOEX</div>
   <div class="a" style="left:16px;top:119px;font-size:12.5px;color:#222">Fichier principal</div>
   <div class="a" style="left:16px;top:144px;width:238px;height:22px;border:1px solid #dfe4ea;background:#fff;font-size:11px;line-height:20px;color:#8aa0b5;padding-left:32px;white-space:nowrap">EXE-BTW-NLD-B ... 02-675-0.pdf<span class="a" style="left:9px;top:0;font-size:7px;color:#555">PDF</span></div>
   <div class="a" style="left:258px;top:144px;width:55px;height:22px;border:1px solid #dfe4ea;background:#f4f6f9;font-size:11px;line-height:20px;color:#8aa0b5;text-align:center">187.2 kB</div>
   <div class="a" style="left:16px;top:185px;font-size:12.5px;color:#222">Pièces jointes</div>
   <div class="a" style="left:16px;top:211px;width:229px;height:22px;border:1px solid #dfe4ea;background:#fff;font-size:11px;line-height:20px;color:#8aa0b5;padding-left:32px;white-space:nowrap">EXE-BTW-NLD-B ...02-67<span class="a" style="left:9px;top:0;font-size:7px;color:#555">PDF</span></div>
   <div class="a" style="left:248px;top:211px;width:31px;height:22px;border:1.5px solid #f5c04a;background:#fff"><svg width="28" height="19" viewBox="0 0 28 19"><path d="M7 9.5c4-5 10-5 14 0-4 5-10 5-14 0z" fill="none" stroke="#222" stroke-width="1.2"/><circle cx="14" cy="9.5" r="2" fill="none" stroke="#222" stroke-width="1.2"/></svg></div>
   <div class="a" style="left:282px;top:211px;width:31px;height:22px;border:1.5px solid #f5c04a;background:#fff"><svg width="28" height="19" viewBox="0 0 28 19"><path d="M14 4v8 M11 9l3 3 3-3 M9 12v3h10v-3" fill="none" stroke="#222" stroke-width="1.2"/></svg></div>
   <div class="a" style="left:16px;top:252px;width:298px;height:30px;border:1px solid #dfe4ea;background:#fff;font-size:12.5px;text-align:center;line-height:28px;color:#222"><span style="color:#666">+</span>&nbsp; Pièces jointes</div>
  </div>

  <div class="a" style="left:16px;top:508px;width:328px;height:147px;border:1px solid #dfe4ea;border-radius:3px;background:#f4f6f9">
   <div class="a" style="left:0;top:62px;width:326px;height:1px;background:#dfe4ea"></div>
   <div class="a" style="left:15px;top:16px;width:20px;height:18px;background:#fde1df;border-radius:2px"><svg width="20" height="18" viewBox="0 0 20 18"><path d="M6 14V5c3-1.5 5 1.5 8 0v5c-3 1.5-5-1.5-8 0" fill="none" stroke="#e0524a" stroke-width="1.3"/></svg></div>
   <div class="a" style="left:45px;top:15px;font-size:15.5px;color:#222">Révision 1</div>
   <div class="a" style="left:313px;top:12px;font-size:14px;color:#888;line-height:6px">·<br>·<br>·</div>
   <div class="a" style="left:15px;top:42px;font-size:9.5px;color:#8aa0b5">10/01/2023 - 16:13</div>
   <div class="a" style="left:135px;top:41px;font-size:9.5px;color:#6f88a3;white-space:nowrap"><span style="background:#e6eaef;border-radius:7px;padding:1px 3px;font-size:8px;color:#333">DS</span> Denis SÉVÊQUE · IKO Real estate</div>
   <div class="a" style="left:15px;top:82px;font-size:12.5px;color:#222">Fichier principal</div>
   <div class="a" style="left:15px;top:107px;width:238px;height:22px;border:1px solid #dfe4ea;background:#fff;font-size:11px;line-height:20px;color:#8aa0b5;padding-left:32px;white-space:nowrap">EXE-BTW-NLD-B ... 02-675-0.pdf<span class="a" style="left:9px;top:0;font-size:7px;color:#555">PDF</span></div>
   <div class="a" style="left:257px;top:107px;width:55px;height:22px;border:1px solid #dfe4ea;background:#f4f6f9;font-size:11px;line-height:20px;color:#8aa0b5;text-align:center">187.2 kB</div>
  </div>
 </div>
</div>

<script>
var R=[
["EXE-BTW-NLD-B-PLG-R02-678-0.pdf","01","r","Phase 1","Admin"],
["Échanges","","","Phase 1","Admin",1],
["Documents de travail","","","Phase 2","Admin",1],
["EXE-BTW-NLD-B-PLG-R02-678-0.pdf","01","r","Phase 3","Admin"],
["EXE-BTW-NLD-B-PLG-R02-678-0.pdf","01","r","Phase 1","MOA"],
["VISA-STR-NLD-B-COF-R02-320-0.pdf","","","Phase 1","MOA"],
["EXE-BTW-NLD-B-PLG-R02-678-0.pdf","","","","MOA"],
["EXE-B-PLG-R02-678-0.pdf","05","g","Phase 1","MOA"],
["DOE-PLB-PLG-R00-118-0.pdf","01","r","Phase 1","Admin"],
["SYN-STR-NLD-A-PLN-R02-410-0.pdf","12","g","","Admin"],
["ETU-GEO-NLD-R00-001-0.pdf","01","r","Phase 1","Admin"],
["EXE-BTW-NLD-B-PLG-R02-678-0.pdf","","","","Admin"],
["SYN-CVC-B-RES-R01-205-0.pdf","08","g","Phase 3","MOEX",0,"h"],
["EXE-BTW-NLD-B-PLG-R02-678-0.pdf","01","r","Phase 1","Admin"],
["ETU-THE-NLD-C-NOT-R03-088-0.pdf","01","b","Phase 1","MOA"],
["DOE-PLB-NLD-B-PLG-R00-118-0.pdf","16","g","","Admin"],
["EXE-BTW-NLD-B-PLG-678-0.pdf","07","g","","MOEX"],
["VISA-STR-NLD-B-COF-R02-320-0.pdf","01","r","","MOEX"],
["ETU-THE-NLD-C-NOT-R03-0.pdf","","","Phase 1","MOEX"],
["ETU-THE-NLD-C-NOT-R03-088-0.pdf","01","r","Phase 4","Admin",0,"s"],
["ETU-THE-NLD-C-NOT-R03-088-0.pdf","","","Phase 1","MOA"],
["EXE-BTW-NLD-B-PLG-R02-0.pdf","","","","MOA"],
["VISA-STR-NLD-B-COF-R02-320-0.pdf","01","r","","MOA"],
["VISA-STR-NLD-B-COF-R02-320-0.pdf","01","","Phase 1","Admin"],
["EXE-BTW-NLD-B-PLG-R02-678-0.pdf","01","r","Phase 1","Admin"]];
var col={r:"#e0524a",g:"#52b552",b:"#6aa3d8"};
var h="";
R.forEach(function(d,i){
 var top=(i*29.75).toFixed(2);
 var bg=d[6]=="s"?"#fdf8e4":(d[6]=="h"?"#fffdf4":"#fff");
 h+='<div class="row" style="top:'+top+'px;background:'+bg+'">';
 h+='<div class="cb" style="'+(d[6]=="s"?'background:#fde3a0;':'')+'">'+(d[6]=="s"?'<div style="margin:3px;width:7px;height:7px;background:#f5a800"></div>':'')+'</div>';
 if(d[5]){h+='<svg class="a" style="left:52px;top:9px" width="13" height="11" viewBox="0 0 13 11"><path d="M0 1h5l1.5 1.5H13V11H0z" fill="#111"/></svg><span style="left:72px;font-size:13.5px;color:#111">'+d[0]+'</span>';}
 else{h+='<svg class="a" style="left:54px;top:9px" width="10" height="12" viewBox="0 0 10 12"><path d="M2 1h5l2 2v8H2z M4 5h3 M4 8h3" fill="none" stroke="#333" stroke-width="1.3"/></svg><span style="left:73px">'+d[0]+'</span>';}
 if(d[1])h+='<span style="left:732px">'+d[1]+'</span>';
 if(d[2])h+='<div class="fl '+d[2]+'"><svg width="20" height="20" viewBox="0 0 20 20"><path d="M7 15V5c2.5-1.3 4 1.3 6.5 0v5c-2.5 1.3-4-1.3-6.5 0" fill="none" stroke="'+col[d[2]]+'" stroke-width="1.3"/></svg></div>';
 if(d[3])h+='<span style="left:863px">'+d[3]+'</span>';
 h+='<span style="left:943px">Toiture</span><span style="right:170px">Plan</span><span style="left:1068px;font-size:12px;letter-spacing:-.3px">02 / 01/ 2026</span><span style="right:19px">'+d[4]+'</span>';
 if(d[6]=="h")h+='<div class="a" style="left:618px;top:-1px;width:76px;height:24px;background:#fff;border:1.5px solid #f5b000;border-radius:3px;box-shadow:0 2px 4px rgba(0,0,0,.15);font-size:13px;line-height:21px;padding-left:26px;color:#222;white-space:nowrap"><span style="left:7px;top:0;color:#f5b000;font-size:12px">◎</span>Ouvrir</div>';
 h+='</div>';
});
document.getElementById("tb").innerHTML=h;
</script>
</body></html>
